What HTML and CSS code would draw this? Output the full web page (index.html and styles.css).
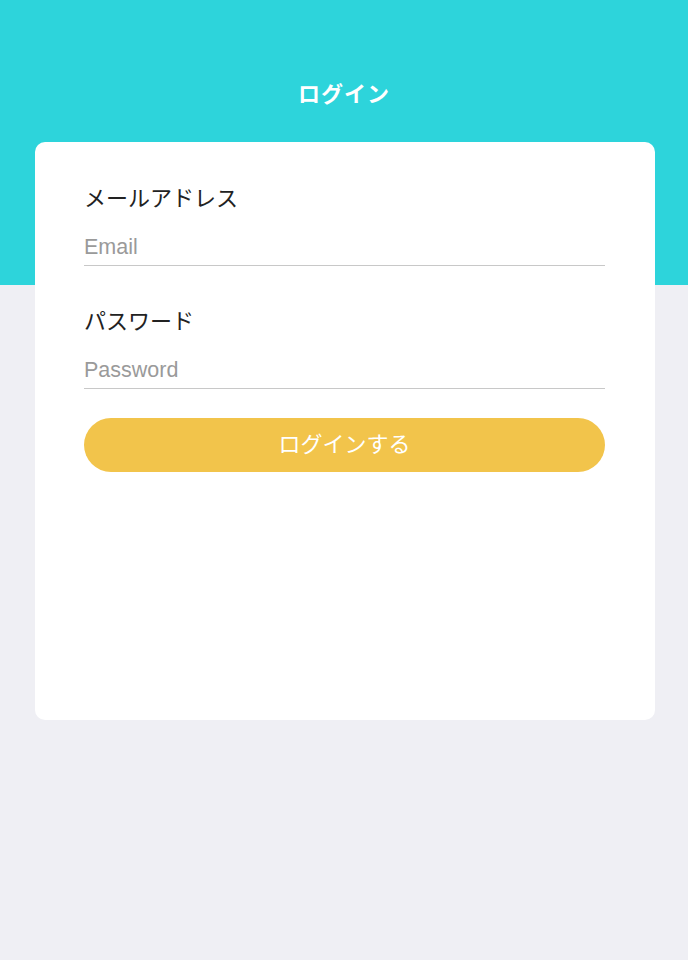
FILE: index.html
```html
<!DOCTYPE html>
<html lang="ja">
<head>
    <meta charset="UTF-8">
    <meta name="viewport" content="width=device-width, initial-scale=1.0">
    <title>ログイン</title>
    <link rel="stylesheet" href="styles.css">
</head>
<body>
    <div class="page">
        <div class="header">
            <h1>ログイン</h1>
        </div>

        <form class="login-card" onsubmit="return false;">
            <label class="field-label" for="email">メールアドレス</label>
            <input class="field-input" id="email" type="email" placeholder="Email">

            <label class="field-label" for="password">パスワード</label>
            <input class="field-input" id="password" type="password" placeholder="Password">

            <button class="login-button" type="submit">ログインする</button>
        </form>
    </div>
</body>
</html>
```

FILE: styles.css
```css
body {
    margin: 0;
    padding: 0;
    font-family: "Liberation Sans", "Noto Sans CJK JP", sans-serif;
    background: #efeff4;
}

.page {
    min-height: 960px;
    background: linear-gradient(to bottom, #2dd4db 0, #2dd4db 285px, #efeff4 285px);
    overflow: hidden;
}

.header {
    padding-top: 77px;
    text-align: center;
}

.header h1 {
    margin: 0;
    font-family: "Noto Sans CJK JP", serif;
    font-size: 22px;
    line-height: 30px;
    font-weight: 700;
    color: #ffffff;
    letter-spacing: 1px;
}

.login-card {
    display: flex;
    flex-direction: column;
    box-sizing: border-box;
    width: 620px;
    height: 578px;
    margin: 35px 0 0 35px;
    padding: 40px 50px 0 49px;
    background: #ffffff;
    border-radius: 10px;
}

.field-label {
    font-family: "Noto Sans CJK JP", sans-serif;
    font-size: 22px;
    line-height: 28px;
    color: #222222;
}

.field-label + .field-input {
    margin-top: 16px;
}

.field-input + .field-label {
    margin-top: 39px;
}

.field-input {
    box-sizing: border-box;
    height: 40px;
    padding: 4px 0 0 0;
    border: none;
    border-bottom: 1px solid #c8c8c8;
    outline: none;
    font-family: "Liberation Sans", sans-serif;
    font-size: 21.5px;
    color: #222222;
    background: transparent;
}

.field-input::placeholder {
    color: #9a9a9a;
}

.login-button {
    margin-top: 29px;
    height: 54px;
    padding: 0 0 6px 0;
    border: none;
    border-radius: 27px;
    background: #f2c44b;
    color: #ffffff;
    font-family: "Noto Sans CJK JP", sans-serif;
    font-size: 22px;
    cursor: pointer;
}
```
